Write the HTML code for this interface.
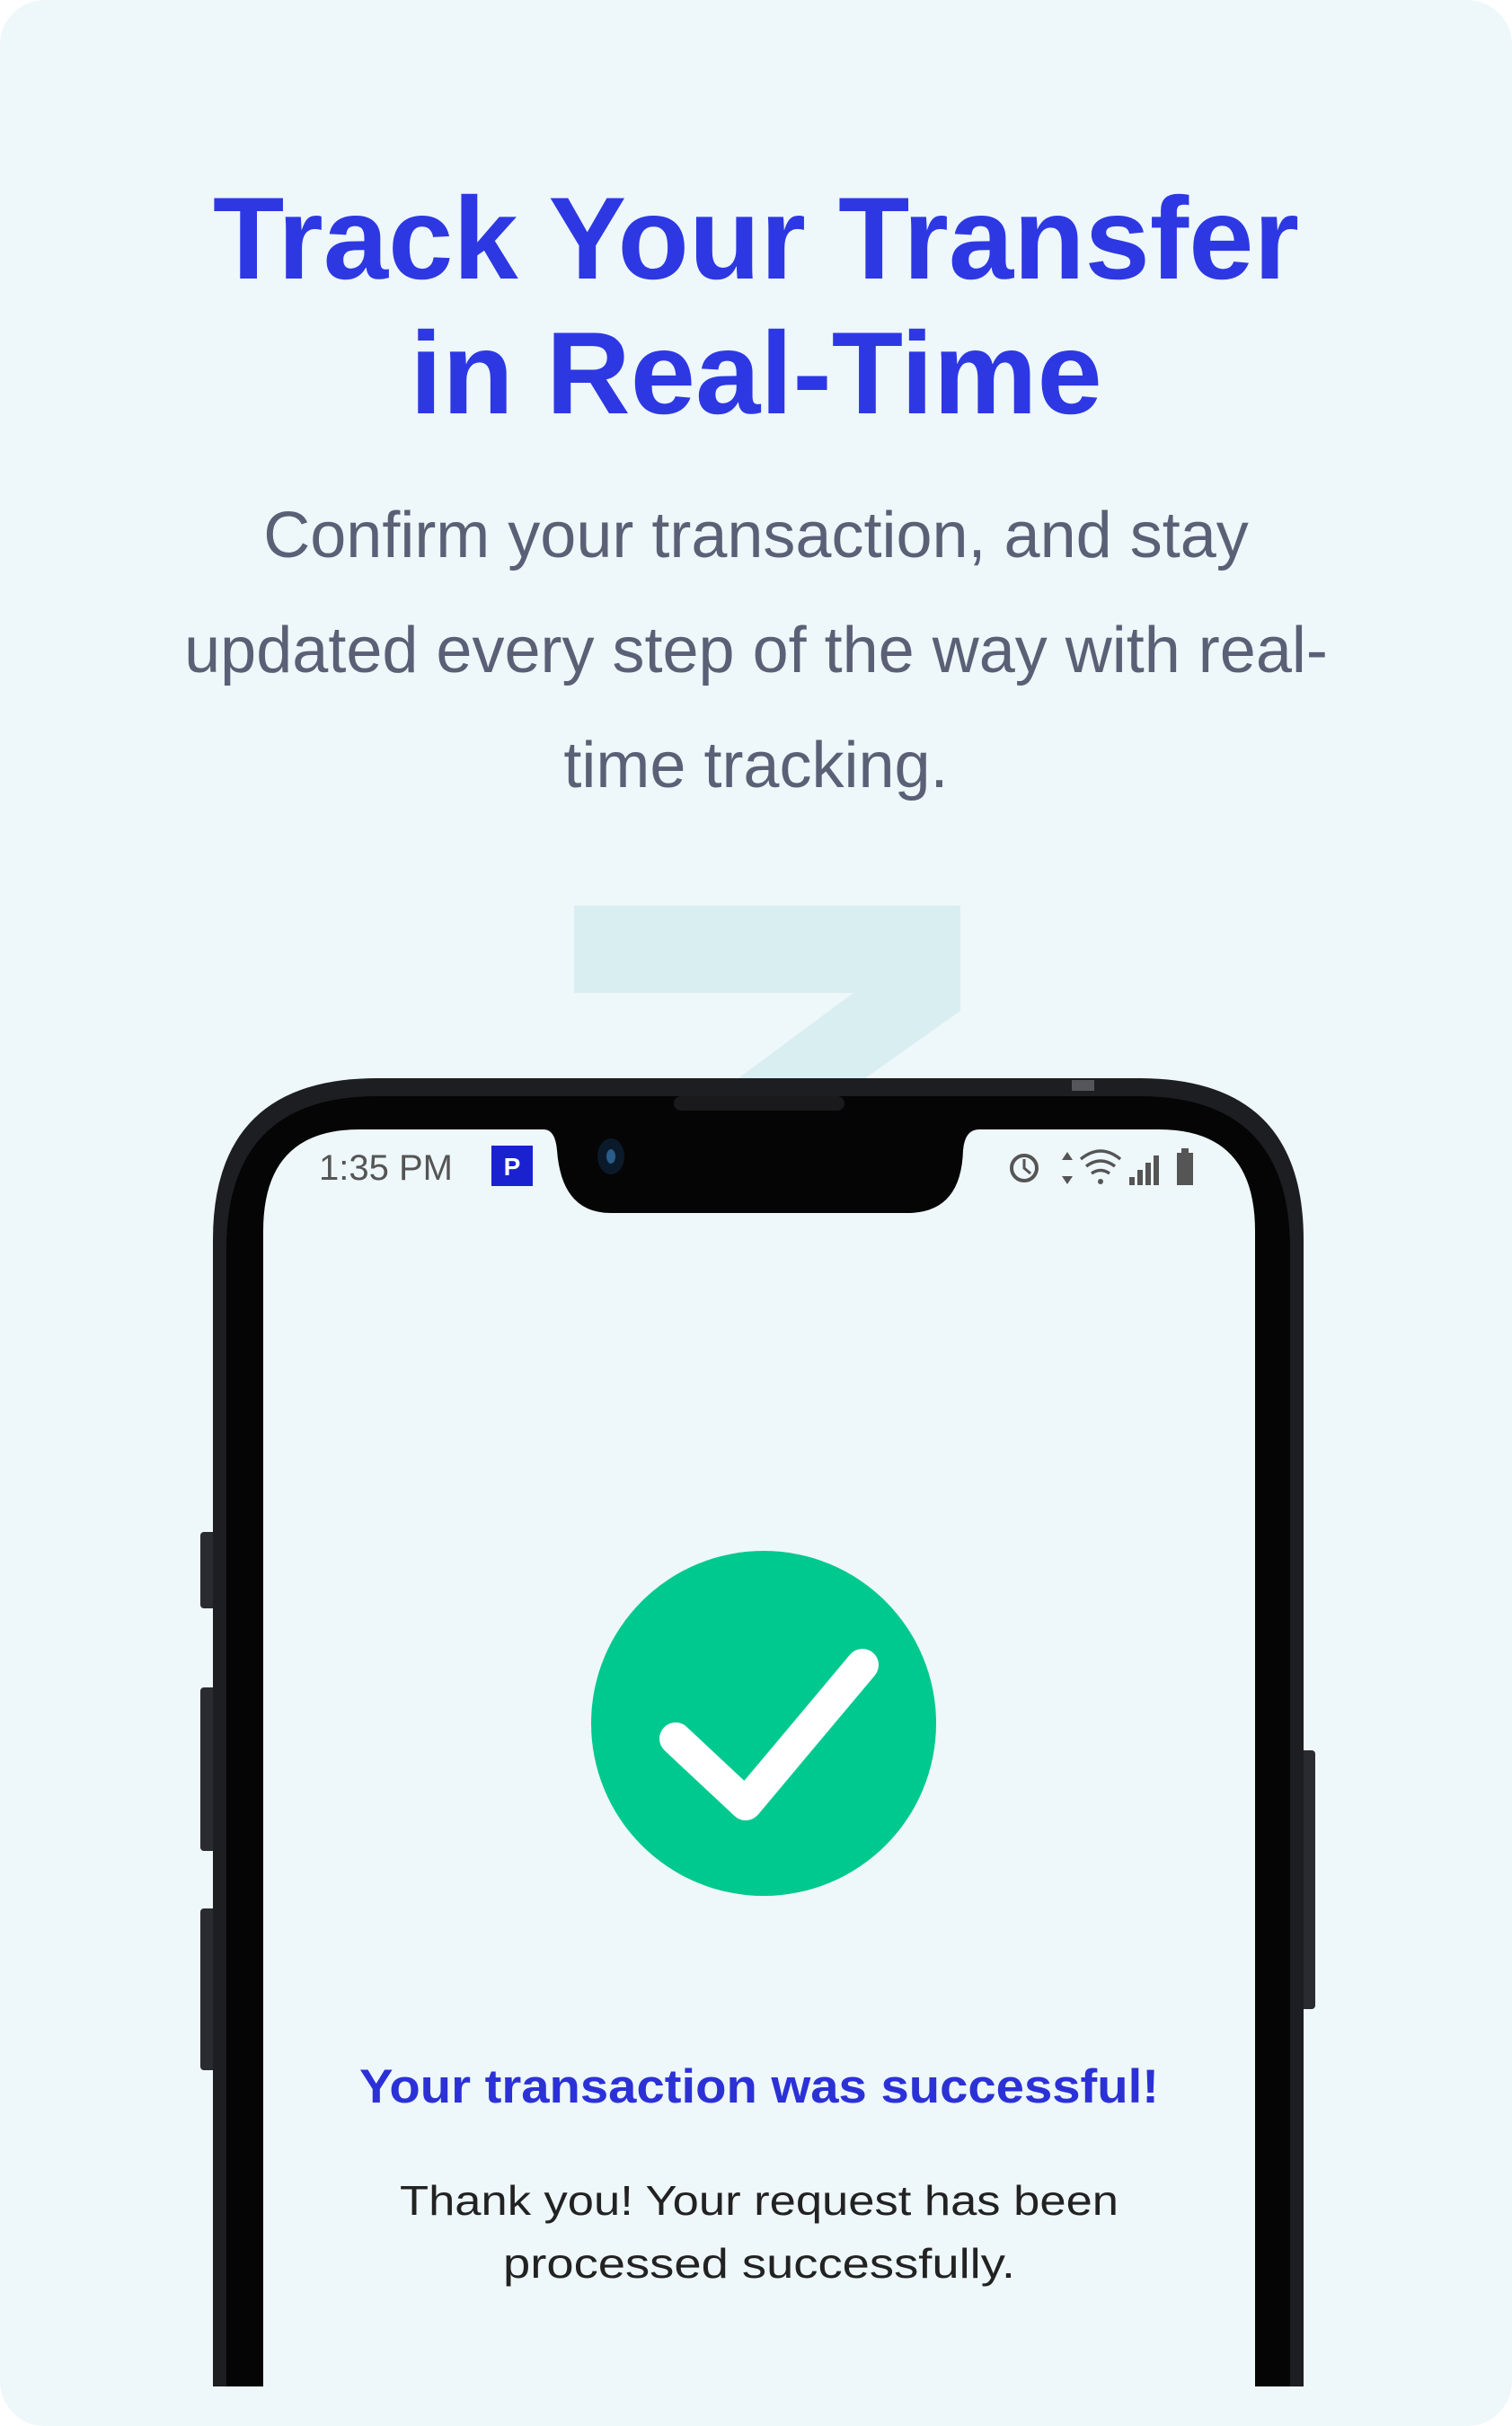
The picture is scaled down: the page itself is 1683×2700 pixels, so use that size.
<!DOCTYPE html>
<html><head><meta charset="utf-8"><style>
html,body{margin:0;padding:0;background:#fff;}
body{width:1683px;height:2656px;position:relative;overflow:hidden;font-family:"Liberation Sans",sans-serif;}
.card{position:absolute;left:0;top:0;width:1683px;height:2700px;background:#eef7f9;border-radius:50px;}
h1{position:absolute;left:0;width:1683px;top:190px;margin:0;text-align:center;color:#2d38e3;font-size:130px;line-height:150px;font-weight:700;letter-spacing:0px;}
p.sub{position:absolute;left:100px;width:1483px;top:532px;margin:0;text-align:center;color:#5a6075;font-size:72px;line-height:128px;letter-spacing:0px;}
</style></head><body>
<div class="card"></div>
<h1>Track Your Transfer<br>in Real-Time</h1>
<p class="sub">Confirm your transaction, and stay<br>updated every step of the way with real-<br>time tracking.</p>
<svg width="1683" height="2656" style="position:absolute;left:0;top:0">
<polygon points="639,1008 1069,1008 1069,1125 963,1200 822,1200 950,1105 639,1105" fill="#d9eef1"/>
<!-- side buttons -->
<rect x="223" y="1705" width="18" height="85" rx="4" fill="#2a2b30"/>
<rect x="223" y="1878" width="18" height="182" rx="4" fill="#2a2b30"/>
<rect x="223" y="2124" width="18" height="180" rx="4" fill="#2a2b30"/>
<rect x="1446" y="1948" width="18" height="288" rx="4" fill="#2a2b30"/>
<!-- phone body -->
<path d="M237,2700 L237,1380 Q237,1200 420,1200 L1268,1200 Q1451,1200 1451,1380 L1451,2700 Z" fill="#1d1e22"/>
<path d="M252,2700 L252,1390 Q252,1220 420,1220 L1268,1220 Q1436,1220 1436,1390 L1436,2700 Z" fill="#050505"/>
<rect x="1193" y="1202" width="25" height="12" fill="#55565c"/>
<!-- screen -->
<path d="M293,2700 L293,1370 Q293,1257 400,1257 L605,1257 Q618,1257 620,1280 Q625,1350 680,1350 L1010,1350 Q1070,1350 1072,1280 Q1074,1257 1090,1257 L1290,1257 Q1397,1257 1397,1370 L1397,2700 Z" fill="#eef7f9"/>
<rect x="750" y="1220" width="190" height="16" rx="8" fill="#1a1a1c"/>
<ellipse cx="680" cy="1287" rx="15" ry="20" fill="#0b1a2a"/>
<ellipse cx="680" cy="1287" rx="5" ry="8" fill="#2a5c8a"/>
<rect x="547" y="1275" width="46" height="45" fill="#1a22d0"/>
<text x="570" y="1308" fill="#fff" font-size="28" font-weight="700" text-anchor="middle" font-family="Liberation Sans">P</text>
<text x="355" y="1313" fill="#555" font-size="40" font-family="Liberation Sans">1:35 PM</text>
<!-- status icons -->
<circle cx="1140" cy="1300" r="14" fill="none" stroke="#555" stroke-width="4"/>
<path d="M1140,1290 L1140,1300 L1147,1306" stroke="#555" stroke-width="3" fill="none"/>
<path d="M1188,1282 l6,9 h-12z M1188,1318 l6,-9 h-12z" fill="#555"/>
<path d="M1203,1290 q22,-18 44,0 M1209,1298 q16,-12 32,0 M1215,1306 q10,-7 20,0" stroke="#555" stroke-width="3.5" fill="none"/>
<circle cx="1225" cy="1315" r="3" fill="#555"/>
<rect x="1257" y="1310" width="6" height="9" fill="#555"/><rect x="1266" y="1302" width="6" height="17" fill="#555"/><rect x="1275" y="1294" width="6" height="25" fill="#555"/><rect x="1284" y="1286" width="6" height="33" fill="#555"/>
<rect x="1310" y="1283" width="18" height="36" fill="#555"/><rect x="1315" y="1278" width="8" height="5" fill="#555"/>
<!-- success -->
<circle cx="850" cy="1918" r="192" fill="#00c98f"/>
<polyline points="752,1935 830,2008 960,1853" fill="none" stroke="#fff" stroke-width="36" stroke-linecap="round" stroke-linejoin="round"/>
<text x="845" y="2340" fill="#2b31d6" font-size="53" font-weight="700" text-anchor="middle" font-family="Liberation Sans" textLength="890" lengthAdjust="spacingAndGlyphs">Your transaction was successful!</text>
<text x="845" y="2465" fill="#222" font-size="46" text-anchor="middle" font-family="Liberation Sans" textLength="800" lengthAdjust="spacingAndGlyphs">Thank you! Your request has been</text>
<text x="845" y="2535" fill="#222" font-size="46" text-anchor="middle" font-family="Liberation Sans" textLength="570" lengthAdjust="spacingAndGlyphs">processed successfully.</text>
</svg>
</body></html>
